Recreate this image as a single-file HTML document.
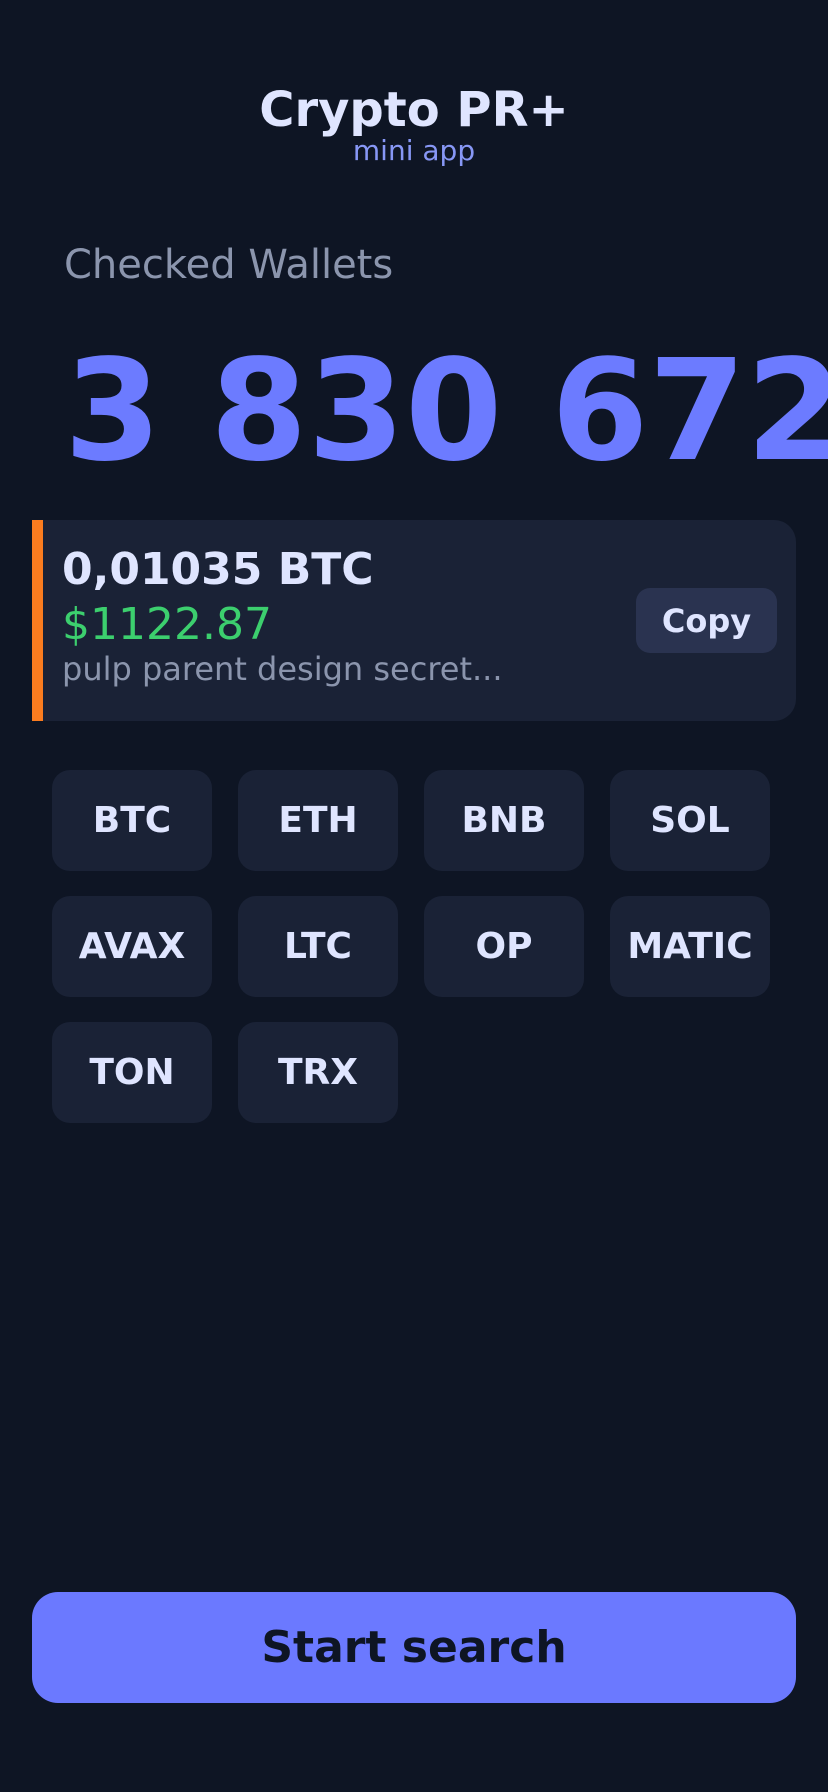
<!DOCTYPE html>
<html><head><meta charset="utf-8"><style>
*{margin:0;padding:0;box-sizing:border-box}
body{width:828px;height:1792px;background:#0e1524;font-family:"DejaVu Sans","Liberation Sans",sans-serif;position:relative;overflow:hidden}
.a{position:absolute;line-height:1;white-space:nowrap}
.chip{position:absolute;width:160px;height:101px;background:#1a2236;border-radius:18px;color:#dfe5ff;font-weight:bold;font-size:36px;display:flex;align-items:center;justify-content:center}
</style></head><body>
<div class="a" style="left:0;width:828px;text-align:center;top:86px;font-size:48px;font-weight:bold;color:#dfe5ff">Crypto PR+</div>
<div class="a" style="left:0;width:828px;text-align:center;top:137px;font-size:28px;color:#8797f5">mini app</div>
<div class="a" style="left:64px;top:245px;font-size:40px;color:#8b95ad">Checked Wallets</div>
<div class="a" style="left:64px;top:342px;font-size:140px;font-weight:bold;color:#6c7bff">3 830 672</div>
<div style="position:absolute;left:32px;top:520px;width:764px;height:201px;background:#1a2236;border-radius:0 22px 22px 0;border-left:11px solid #fb7c1f"></div>
<div class="a" style="left:62px;top:548px;font-size:44px;font-weight:bold;color:#dfe5ff">0,01035 BTC</div>
<div class="a" style="left:62px;top:603px;font-size:44px;color:#3ccf6e">$1122.87</div>
<div class="a" style="left:62px;top:653px;font-size:32px;color:#8b95ad">pulp parent design secret...</div>
<div style="position:absolute;left:636px;top:588px;width:141px;height:65px;background:#2a3350;border-radius:14px;color:#dfe5ff;font-weight:bold;font-size:32px;display:flex;align-items:center;justify-content:center">Copy</div>
<div class="chip" style="left:52px;top:770px">BTC</div>
<div class="chip" style="left:238px;top:770px">ETH</div>
<div class="chip" style="left:424px;top:770px">BNB</div>
<div class="chip" style="left:610px;top:770px">SOL</div>
<div class="chip" style="left:52px;top:896px">AVAX</div>
<div class="chip" style="left:238px;top:896px">LTC</div>
<div class="chip" style="left:424px;top:896px">OP</div>
<div class="chip" style="left:610px;top:896px">MATIC</div>
<div class="chip" style="left:52px;top:1022px">TON</div>
<div class="chip" style="left:238px;top:1022px">TRX</div>
<div style="position:absolute;left:32px;top:1592px;width:764px;height:111px;background:#6b79ff;border-radius:26px;color:#0e1524;font-weight:bold;font-size:44px;display:flex;align-items:center;justify-content:center">Start search</div>
</body></html>
